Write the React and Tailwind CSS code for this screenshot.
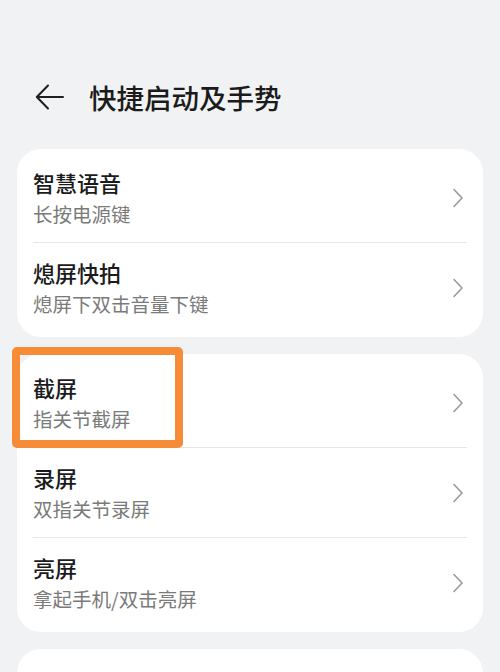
import React from "react";

const font = { fontFamily: '"Noto Sans CJK SC", "Noto Sans", sans-serif' };

function Chevron() {
  return (
    <svg width="12" height="20" viewBox="0 0 12 20" className="shrink-0">
      <path d="M2 1.5 L10 10 L2 18.5" fill="none" stroke="#9a9a9a" strokeWidth="1.6" strokeLinecap="round" strokeLinejoin="round" />
    </svg>
  );
}

function Row({ title, sub, last }) {
  return (
    <div className="relative h-[90px] flex items-start justify-between pl-4 pr-[19px]">
      <div className="pt-[14px]">
        <div className="text-[22px] leading-[30px] font-medium text-[#1b1b1b]">{title}</div>
        <div className="mt-[1px] text-[19.5px] leading-[31px] text-[#7a7a7a]">{sub}</div>
      </div>
      <div className="self-center">
        <Chevron />
      </div>
      {!last && <div className="absolute left-4 right-4 bottom-0 h-px bg-[#e6e6e6]" />}
    </div>
  );
}

function Card({ rows }) {
  return (
    <div className="mx-[17px] bg-white rounded-[24px] py-1">
      {rows.map((r, i) => (
        <Row key={i} title={r[0]} sub={r[1]} last={i === rows.length - 1} />
      ))}
    </div>
  );
}

export default function App() {
  return (
    <div className="relative w-[500px] h-[672px] overflow-hidden bg-[#f1f2f4]" style={font}>
      <div className="pt-[77px] h-[149px] flex items-start">
        <div className="flex items-center h-[40px]">
          <svg width="30" height="26" viewBox="0 0 30 26" className="ml-[35px]">
            <path d="M28 13 H2 M13 1.5 L1.8 13 L13 24.5" fill="none" stroke="#1f1f1f" strokeWidth="2" strokeLinecap="round" strokeLinejoin="round" />
          </svg>
          <div className="ml-[24px] text-[27.5px] leading-[40px] font-medium text-[#1b1b1b]">快捷启动及手势</div>
        </div>
      </div>
      <div className="flex flex-col gap-[17px]">
        <Card rows={[["智慧语音", "长按电源键"], ["熄屏快拍", "熄屏下双击音量下键"]]} />
        <Card rows={[["截屏", "指关节截屏"], ["录屏", "双指关节录屏"], ["亮屏", "拿起手机/双击亮屏"]]} />
        <div className="mx-[17px] bg-white rounded-[24px] h-[120px]" />
      </div>
      <div className="absolute left-[12px] top-[347px] w-[171px] h-[101px] border-[8px] border-[#f68b38] rounded-[5px]" />
    </div>
  );
}
